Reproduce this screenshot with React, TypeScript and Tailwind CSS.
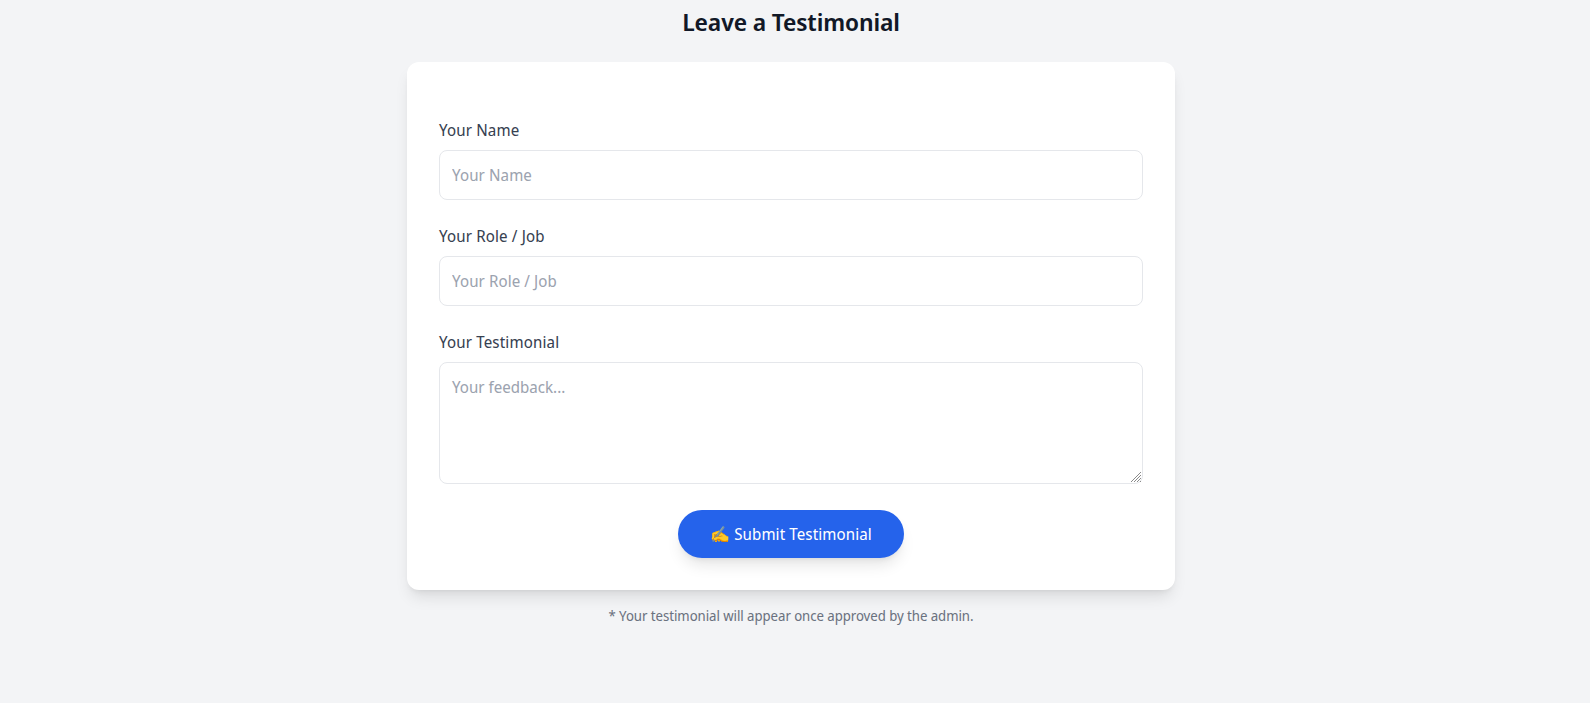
export default function App() {
  return (
    <div className="min-h-[703px] bg-[#f3f4f6] pt-[6px] pr-2 font-['Noto_Sans_Display','Noto_Sans',sans-serif]">
      <h2 className="mb-6 text-center text-2xl font-semibold tracking-[-0.1px] text-[#111827]">Leave a Testimonial</h2>

      <div className="mx-auto max-w-3xl rounded-xl bg-white p-8 pt-14 shadow-lg">
        <form className="flex flex-col gap-6">
          <div>
            <label className="mb-2 block text-base tracking-[0.15px] text-[#374151]">Your Name</label>
            <input
              type="text"
              placeholder="Your Name"
              className="w-full rounded-lg border border-[#e5e7eb] bg-white px-3 py-3 text-base tracking-[0.1px] outline-none placeholder:text-[#9ca3af]"
            />
          </div>

          <div>
            <label className="mb-2 block text-base tracking-[0.15px] text-[#374151]">Your Role / Job</label>
            <input
              type="text"
              placeholder="Your Role / Job"
              className="w-full rounded-lg border border-[#e5e7eb] bg-white px-3 py-3 text-base tracking-[0.1px] outline-none placeholder:text-[#9ca3af]"
            />
          </div>

          <div>
            <label className="mb-2 block text-base tracking-[0.15px] text-[#374151]">Your Testimonial</label>
            <div className="relative">
              <textarea
                rows={4}
                placeholder="Your feedback..."
                className="block w-full resize-none rounded-lg border border-[#e5e7eb] bg-white px-3 py-3 text-base outline-none placeholder:text-[#9ca3af]"
              />
              {/* resize grip */}
              <svg className="absolute bottom-[2px] right-[2px]" width="10" height="10" viewBox="0 0 10 10" stroke="#8b8b8b" strokeWidth="1">
                <path d="M10 0L0 10M10 3L3 10M10 6L6 10M10 9L9 10" />
              </svg>
            </div>
          </div>

          <div className="mt-[2px] text-center">
            <button
              type="button"
              className="rounded-full bg-[#2563eb] px-8 py-3 text-base tracking-[0.1px] text-white shadow-lg"
            >
              ✍️ Submit Testimonial
            </button>
          </div>
        </form>
      </div>

      <p className="mt-4 text-center text-sm tracking-[-0.05px] text-[#6b7280]">
        * Your testimonial will appear once approved by the admin.
      </p>
    </div>
  );
}
